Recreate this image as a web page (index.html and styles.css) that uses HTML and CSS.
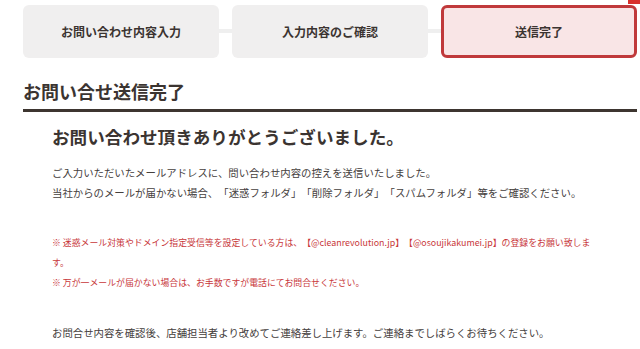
FILE: index.html
```html
<!DOCTYPE html>
<html lang="ja">
<head>
<meta charset="utf-8">
<title>お問い合せ送信完了</title>
<link rel="stylesheet" href="styles.css">
</head>
<body>
<div class="page">
  <span class="corner-badge"></span>
  <ol class="steps">
    <li class="step">お問い合わせ内容入力</li>
    <li class="step">入力内容のご確認</li>
    <li class="step active">送信完了</li>
  </ol>
  <h1 class="title">お問い合せ送信完了</h1>
  <div class="content">
    <h2 class="thanks">お問い合わせ頂きありがとうございました。</h2>
    <p class="text">ご入力いただいたメールアドレスに、問い合わせ内容の控えを送信いたしました。<br>当社からのメールが届かない場合、「迷惑フォルダ」「削除フォルダ」「スパムフォルダ」等をご確認ください。</p>
    <p class="notice">※ 迷惑メール対策やドメイン指定受信等を設定している方は、【@cleanrevolution.jp】【@osoujikakumei.jp】の登録をお願い致します。<br>※ 万が一メールが届かない場合は、お手数ですが電話にてお問合せください。</p>
    <p class="text last">お問合せ内容を確認後、店舗担当者より改めてご連絡差し上げます。ご連絡までしばらくお待ちください。</p>
  </div>
</div>
</body>
</html>
```
FILE: styles.css
```css
html, body {
  margin: 0;
  padding: 0;
  background: #ffffff;
}
body {
  font-family: "Noto Sans CJK JP", "Noto Sans", sans-serif;
  color: #3b3431;
  text-spacing-trim: space-all;
}
.page {
  position: relative;
  padding: 0 3px 0 23px;
}
.corner-badge {
  position: absolute;
  top: 0;
  right: 0;
  width: 12px;
  height: 4px;
  background: #d8302c;
}
.steps {
  list-style: none;
  margin: 0;
  padding: 5px 0 0 0;
  display: flex;
  gap: 13px;
}
.step {
  position: relative;
  width: 196px;
  height: 53px;
  box-sizing: border-box;
  background: #f0efef;
  border-radius: 6px;
  display: flex;
  align-items: center;
  justify-content: center;
  font-size: 12px;
  font-weight: bold;
  color: #3b3431;
}
.step + .step::before {
  content: "";
  position: absolute;
  left: -13px;
  top: 24px;
  width: 13px;
  height: 4px;
  background: #efefef;
}
.step.active {
  background: #f9e5e6;
  border: 3px solid #c0393b;
}
.step.active::before {
  left: -16px;
  top: 21px;
}
.title {
  margin: 19px 0 0 0;
  padding-bottom: 4px;
  font-size: 18px;
  line-height: 28px;
  font-weight: bold;
  color: #3b3431;
  border-bottom: 3px solid #3d3530;
}
.content {
  padding: 0 42px 0 29px;
}
.thanks {
  margin: 12px 0 0 0;
  font-size: 17.6px;
  line-height: 26px;
  font-weight: bold;
  color: #3b3431;
}
.text {
  margin: 13px 0 0 0;
  font-size: 10.4px;
  line-height: 20px;
  color: #45403d;
}
.notice {
  margin: 30px 0 0 0;
  font-size: 8.9px;
  line-height: 20px;
  color: #c8373a;
}
.text.last {
  margin-top: 30px;
}
```
